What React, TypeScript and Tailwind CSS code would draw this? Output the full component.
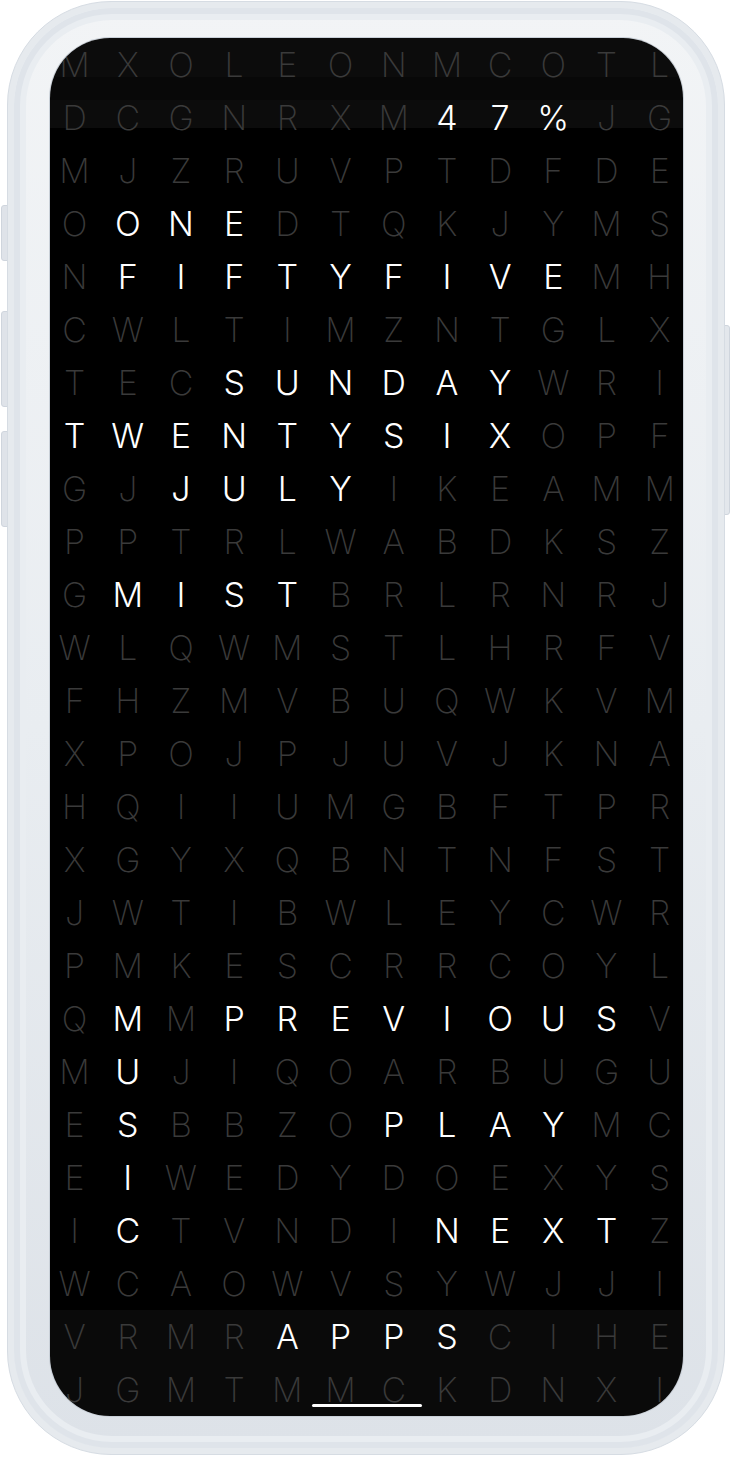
import React from "react";

const rows = [
  "MXOLEONMCOTL",
  "DCGNRXM47%JG",
  "MJZRUVPTDFDE",
  "OONEDTQKJYMS",
  "NFIFTYFIVEMH",
  "CWLTIMZNTGLX",
  "TECSUNDAYWRI",
  "TWENTYSIXOPF",
  "GJJULYIKEAMM",
  "PPTRLWABDKSZ",
  "GMISTBRLRNRJ",
  "WLQWMSTLHRFV",
  "FHZMVBUQWKVM",
  "XPOJPJUVJKNA",
  "HQIIUMGBFTPR",
  "XGYXQBNTNFST",
  "JWTIBWLEYCWR",
  "PMKESCRRCOYL",
  "QMMPREVIOUSV",
  "MUJIQOARBUGU",
  "ESBBZOPLAYMC",
  "EIWEDYDOEXYS",
  "ICTVNDINEXTZ",
  "WCAOWVSYWJJI",
  "VRMRAPPSCIHE",
  "JGMTMMCKDNXI",
];

// lit cells per row
const lit: Record<number, string> = {
  1: "000000011100",
  3: "011100000000",
  4: "011111111100",
  6: "000111111000",
  7: "111111111000",
  8: "001111000000",
  10: "011110000000",
  18: "010111111110",
  19: "010000000000",
  20: "010000111100",
  21: "010000000000",
  22: "010000011110",
  24: "000011110000",
};

function Cell({ ch, on }: { ch: string; on: boolean }) {
  return (
    <div
      className={
        on
          ? "flex items-center justify-center text-white font-light"
          : "flex items-center justify-center text-[#3a3a3a] font-extralight"
      }
    >
      {ch}
    </div>
  );
}

const btn = "w-[9px] rounded-l-[3px] bg-[#dfe3e9] border border-[#cfd5dd]";

export default function App() {
  return (
    <div className="w-[733px] h-[1457px] bg-white overflow-hidden flex pt-[1px] pl-[1px]">
      {/* left buttons */}
      <div className="w-[6px] shrink-0 flex flex-col">
        <div className={btn + " h-[56px] mt-[204px]"} />
        <div className={btn + " h-[96px] mt-[50px]"} />
        <div className={btn + " h-[96px] mt-[24px]"} />
      </div>

      {/* phone body */}
      <div className="relative z-10 w-[718px] h-[1454px] shrink-0 rounded-[104px] bg-[#e6eaee] border border-[#d6dce3] p-[6px]">
        <div className="w-full h-full rounded-[98px] bg-gradient-to-b from-[#f2f4f6] via-[#e9edf1] to-[#dde2e8] shadow-[inset_0_0_0_6px_#dfe4ea,inset_0_0_0_12px_#e9edf1] pt-[30px] pl-[36px] pr-[35px]">
          <div
            className="relative w-[633px] h-[1378px] rounded-[60px] overflow-hidden ring-1 ring-[#c9d0d8] bg-[linear-gradient(to_bottom,#0c0c0c_0px,#0c0c0c_39px,#080808_39px,#080808_62px,#0c0c0c_62px,#0c0c0c_90px,#000_90px,#000_1272px,#0a0a0a_1272px)]"
            style={{ fontFamily: "Inter, 'Liberation Sans', sans-serif" }}
          >
            <div className="-ml-[2px] grid grid-cols-[repeat(12,53.2px)] grid-rows-[repeat(26,53px)] text-[34px] leading-none">
              {rows.map((r, i) =>
                r.split("").map((ch, j) => (
                  <Cell key={i + "-" + j} ch={ch} on={(lit[i] || "")[j] === "1"} />
                ))
              )}
            </div>
            {/* home indicator */}
            <div className="absolute bottom-[9px] left-1/2 -translate-x-1/2 w-[110px] h-[3px] rounded-full bg-white" />
          </div>
        </div>
      </div>

      {/* right button */}
      <div className="shrink-0 flex flex-col">
        <div className="w-[8px] h-[190px] mt-[324px] -ml-[3px] rounded-r-[3px] bg-[#e3e7ec] border border-[#cfd5dd]" />
      </div>
    </div>
  );
}
